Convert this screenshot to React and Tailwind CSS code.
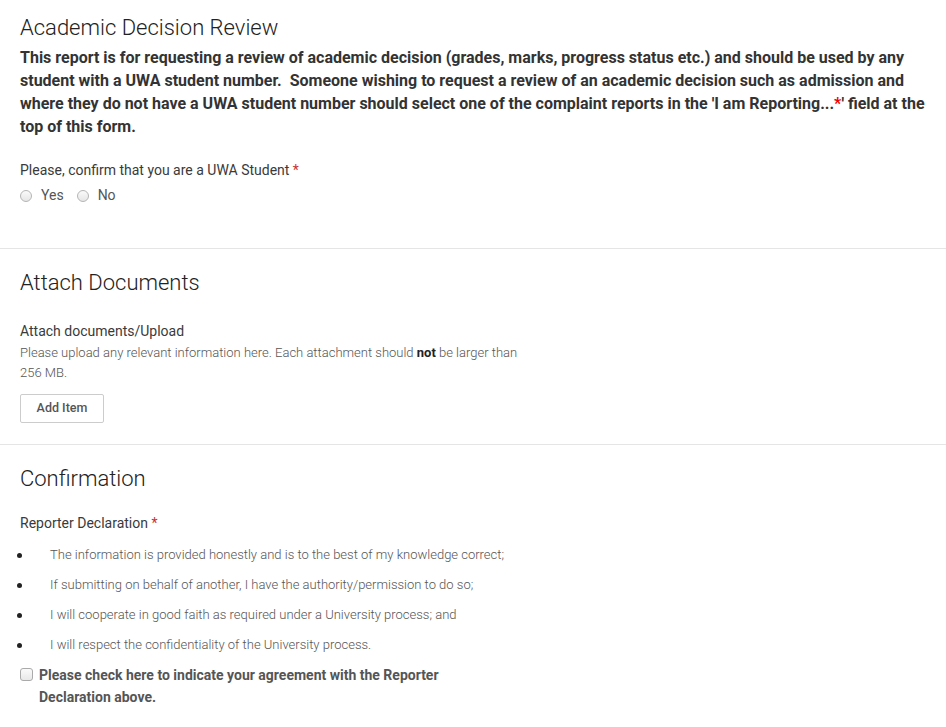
import React from "react";

const Req = () => <span className="text-[#c9302c]"> *</span>;

const Section = ({ title, children }) => (
  <div className="px-5">
    <h2 className="text-[22px] leading-[30px] font-light text-[#222]">{title}</h2>
    {children}
  </div>
);

const bullets = [
  "The information is provided honestly and is to the best of my knowledge correct;",
  "If submitting on behalf of another, I have the authority/permission to do so;",
  "I will cooperate in good faith as required under a University process; and",
  "I will respect the confidentiality of the University process.",
];

export default function App() {
  return (
    <div className="bg-white min-h-[727px] font-['Roboto',sans-serif] text-[#333]">
      <div className="pt-[13px] pb-[42px]">
        <Section title="Academic Decision Review">
          <p className="mt-[3px] text-[16px] leading-[23px] font-bold text-[#333] mr-[-10px]">
            This report is for requesting a review of academic decision (grades, marks, progress status etc.) and should be used by any
            student with a UWA student number.&nbsp; Someone wishing to request a review of an academic decision such as admission and
            where they do not have a UWA student number should select one of the complaint reports in the 'I am Reporting...
            <span className="text-[#e00]">*</span>' field at the top of this form.
          </p>
          <div className="mt-[22px] text-[14px] leading-[20px] text-[#3a3a3a]">
            Please, confirm that you are a UWA Student<Req />
          </div>
          <div className="mt-[5px] flex items-center text-[14px] text-[#555]">
            <label className="flex items-center">
              <span className="w-[12px] h-[12px] rounded-full border border-[#b5b5b5] bg-gradient-to-b from-[#fafafa] to-[#e6e6e6]" />
              <span className="ml-[9px]">Yes</span>
            </label>
            <label className="flex items-center ml-[13px]">
              <span className="w-[12px] h-[12px] rounded-full border border-[#b5b5b5] bg-gradient-to-b from-[#fafafa] to-[#e6e6e6]" />
              <span className="ml-[9px]">No</span>
            </label>
          </div>
        </Section>
      </div>

      <div className="border-t border-[#e5e5e5] pt-[19px] pb-[21px]">
        <Section title="Attach Documents">
          <div className="mt-[23px] text-[14px] leading-[20px] text-[#3a3a3a]">Attach documents/Upload</div>
          <p className="mt-[2px] max-w-[500px] text-[13px] leading-[20px] font-light text-[#555]">
            Please upload any relevant information here. Each attachment should <span className="font-bold text-[#222]">not</span> be larger than 256 MB.
          </p>
          <button className="mt-[11px] w-[84px] h-[29px] border border-[#ccc] rounded-[2px] bg-white text-[12.5px] font-medium text-[#555]">
            Add Item
          </button>
        </Section>
      </div>

      <div className="border-t border-[#e5e5e5] pt-[19px]">
        <Section title="Confirmation">
          <div className="mt-[19px] text-[14px] leading-[20px] text-[#3a3a3a]">
            Reporter Declaration<Req />
          </div>
          <ul className="mt-[7px] -ml-[3px]">
            {bullets.map((b) => (
              <li key={b} className="flex items-center h-[30px] text-[13px] font-light text-[#555]">
                <span className="w-[5px] h-[5px] rounded-full bg-[#222] shrink-0" />
                <span className="ml-[28px]">{b}</span>
              </li>
            ))}
          </ul>
          <label className="mt-[4px] flex items-start">
            <span className="mt-[4px] w-[13px] h-[13px] rounded-[3px] border border-[#aaa] bg-gradient-to-b from-[#fafafa] to-[#e8e8e8] shrink-0" />
            <span className="ml-[6px] max-w-[420px] text-[14px] leading-[22px] font-bold text-[#555]">
              Please check here to indicate your agreement with the Reporter Declaration above.
            </span>
          </label>
        </Section>
      </div>
    </div>
  );
}
